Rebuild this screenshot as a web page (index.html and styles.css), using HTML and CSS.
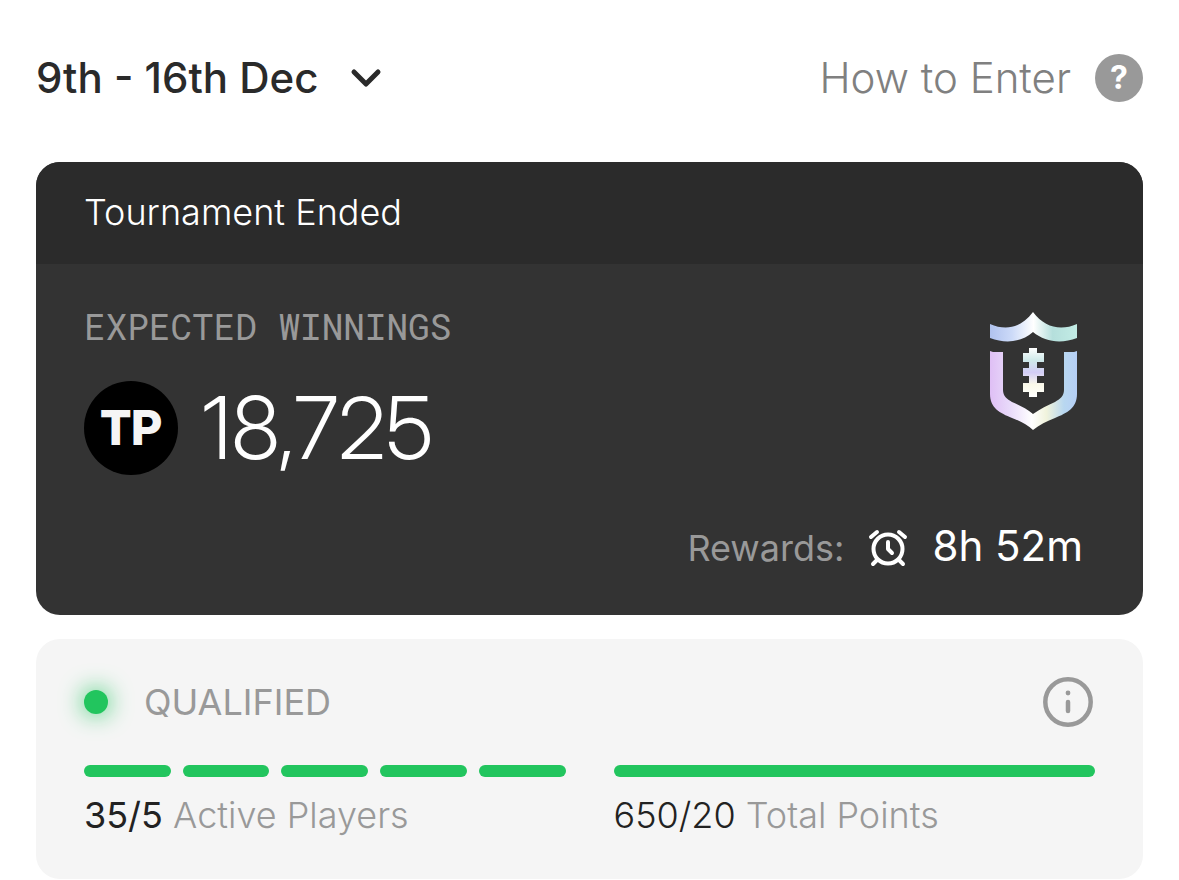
FILE: index.html
```html
<!DOCTYPE html>
<html lang="en">
<head>
  <meta charset="utf-8">
  <meta name="viewport" content="width=device-width, initial-scale=1">
  <link rel="stylesheet" href="styles.css">
  <title>Tournament</title>
</head>
<body>
  <header class="topbar">
    <div class="week">
      <select class="week-select" aria-label="Week">
        <option>9th - 16th Dec</option>
      </select>
      <svg class="chevron" viewBox="0 0 32 20" aria-hidden="true"><path d="M4 4l12 12L28 4"/></svg>
    </div>
    <a class="how-to" href="#">How to Enter <span class="help">?</span></a>
  </header>

  <main>
    <section class="card">
      <h1 class="card-head">Tournament Ended</h1>
      <div class="card-body">
        <div class="card-top">
          <div>
            <h2 class="label">EXPECTED WINNINGS</h2>
            <div class="winnings">
              <span class="coin">TP</span>
              <span class="amount">18,725</span>
            </div>
          </div>
          <svg class="shield" viewBox="0 0 100 130" aria-hidden="true">
            <defs>
              <linearGradient id="top" x1="0" x2="1">
                <stop offset="0" stop-color="#b0c2ee"/>
                <stop offset=".25" stop-color="#ccdaf8"/>
                <stop offset=".5" stop-color="#fff"/>
                <stop offset=".72" stop-color="#b5dfdc"/>
                <stop offset="1" stop-color="#c2ece5"/>
              </linearGradient>
              <linearGradient id="base" x1="0" x2="1">
                <stop offset="0" stop-color="#dfbff5"/>
                <stop offset=".22" stop-color="#e8d9fa"/>
                <stop offset=".48" stop-color="#fff"/>
                <stop offset=".65" stop-color="#f0f3dc"/>
                <stop offset=".85" stop-color="#b8d7f0"/>
                <stop offset="1" stop-color="#b5cff6"/>
              </linearGradient>
              <linearGradient id="ball" x1="0" x2="0" y1="0" y2="1">
                <stop offset="0" stop-color="#fff"/>
                <stop offset=".25" stop-color="#cfeaea"/>
                <stop offset=".5" stop-color="#d3cdf6"/>
                <stop offset=".75" stop-color="#fbfae9"/>
                <stop offset="1" stop-color="#fff"/>
              </linearGradient>
            </defs>
            <path fill="url(#top)" d="M7 19C23 26 38 23 50 7C62 23 78 26 94 19V33C78 39 62 37 50 27C39 37 23 39 7 33Z"/>
            <path fill="url(#base)" d="M7 46L10 47H20V85C20 91 24 94 29 97C36 100 44 104 50 109C57 104 65 100 72 97C77 94 81 91 81 85V47H91L94 46V89C94 103 84 108 72 113C64 116 56 120 50 125C45 120 37 116 29 113C17 108 7 103 7 89Z"/>
            <path fill="url(#ball)" d="M46 43H54V48H61V57H54V63H61V71H54V78H61V87H54V92H46V87H40V78H46V71H40V63H46V57H40V48H46Z"/>
          </svg>
        </div>
        <div class="rewards">
          <span class="rewards-label">Rewards:</span>
          <svg class="clock" viewBox="0 0 40 40" aria-hidden="true">
            <circle cx="20" cy="20" r="14.5"/>
            <path d="M20 13V20L24 24M3 8L9 3M31 3L37 8M9 31L5 35M31 31L35 35"/>
          </svg>
          <span class="time">8h 52m</span>
        </div>
      </div>
    </section>

    <section class="status">
      <div class="status-head">
        <span class="dot"></span>
        <h2 class="status-title">QUALIFIED</h2>
        <button class="info" type="button" aria-label="Info">
          <svg viewBox="0 0 50 50" aria-hidden="true">
            <circle cx="25" cy="25" r="22.7" fill="none" stroke="#999" stroke-width="4.5"/>
            <circle cx="25" cy="16" r="2.4" fill="#999"/>
            <path d="M25 25V34" stroke="#999" stroke-width="4.5" stroke-linecap="round"/>
          </svg>
        </button>
      </div>
      <div class="goals">
        <div class="goal">
          <div class="bars"><i></i><i></i><i></i><i></i><i></i></div>
          <p><b>35/5</b> Active Players</p>
        </div>
        <div class="goal">
          <div class="bars"><i></i></div>
          <p><span class="count">650/20</span> Total Points</p>
        </div>
      </div>
    </section>
  </main>
</body>
</html>
```
FILE: styles.css
```css
* { box-sizing: border-box; }

body {
  margin: 0;
  padding: 54px 36px 0;
  background: #fff;
  color: #222;
  font-family: Inter, "Liberation Sans", sans-serif;
  font-optical-sizing: none;
  font-size: 36px;
  font-weight: 300;
  line-height: 42px;
}

h1, h2, p { margin: 0; font-size: 36px; font-weight: 300; }
svg { display: block; }

/* top bar */
.topbar {
  display: flex;
  justify-content: space-between;
  align-items: center;
  height: 48px;
  margin-bottom: 60px;
  font-size: 42px;
  line-height: 48px;
}
.week { position: relative; }
.week-select {
  appearance: none;
  padding: 0 63px 0 0;
  border: 0;
  background: none;
  color: #2a2a2a;
  font: inherit;
  font-weight: 500;
}
.chevron {
  position: absolute;
  right: 0;
  top: 14px;
  width: 32px;
  fill: none;
  stroke: #2a2a2a;
  stroke-width: 5;
  stroke-linecap: round;
  stroke-linejoin: round;
  pointer-events: none;
}
.how-to {
  display: flex;
  gap: 24px;
  color: #808080;
  text-decoration: none;
}
.help {
  width: 48px;
  height: 48px;
  border-radius: 50%;
  background: #999;
  color: #fff;
  font-size: 32px;
  font-weight: 700;
  text-align: center;
}

/* tournament card */
.card {
  margin-bottom: 24px;
  border-radius: 24px;
  background: #333;
  color: #fff;
  overflow: hidden;
}
.card-head {
  padding: 29px 48px 31px;
  background: #2b2b2b;
}
.card-body { padding: 41px 60px 42px 48px; }
.card-top {
  display: flex;
  justify-content: space-between;
  margin-bottom: 46px;
}
.label {
  margin-bottom: 34px;
  color: #999;
  font-family: "Roboto Mono", "Liberation Mono", monospace;
  font-weight: 400;
}
.winnings {
  display: flex;
  align-items: center;
  gap: 24px;
}
.coin {
  width: 94px;
  height: 94px;
  border-radius: 50%;
  background: #000;
  color: #f5f5f5;
  font-family: "Inter Display", "Inter Tight", Inter, "Liberation Sans", sans-serif;
  font-size: 48px;
  font-weight: 800;
  line-height: 94px;
  text-align: center;
}
.amount {
  font-family: "Inter Display", "Inter Tight", Inter, "Liberation Sans", sans-serif;
  font-size: 86px;
  font-optical-sizing: auto;
  line-height: 94px;
}
.shield { width: 100px; height: 130px; }
.rewards {
  display: flex;
  align-items: baseline;
  justify-content: flex-end;
  gap: 24px;
  line-height: 50px;
}
.rewards-label { color: #999; font-weight: 400; }
.clock {
  align-self: flex-end;
  width: 40px;
  margin-bottom: 4px;
  fill: none;
  stroke: #fff;
  stroke-width: 4;
  stroke-linecap: round;
  stroke-linejoin: round;
}
.time { font-size: 42px; font-weight: 400; }

/* qualification */
.status {
  padding: 38px 48px 43px;
  border-radius: 24px;
  background: #f5f5f5;
  color: #999;
}
.status-head {
  display: flex;
  align-items: center;
  margin-bottom: 38px;
}
.dot {
  width: 24px;
  height: 24px;
  margin-right: 36px;
  border-radius: 50%;
  background: #22c55e;
  box-shadow: 0 0 24px #22c55e;
}
.status-title { font-weight: 400; }
.info {
  width: 50px;
  height: 50px;
  margin-left: auto;
  margin-right: 2px;
  padding: 0;
  border: 0;
  background: none;
}
.goals {
  display: grid;
  grid-template-columns: 1fr 1fr;
  gap: 48px;
}
.bars {
  display: flex;
  gap: 12px;
  margin-bottom: 17px;
}
.bars i {
  flex: 1;
  height: 12px;
  border-radius: 6px;
  background: #22c55e;
}
.goal b { color: #222; font-weight: 400; }
.count { color: #222; }
```
